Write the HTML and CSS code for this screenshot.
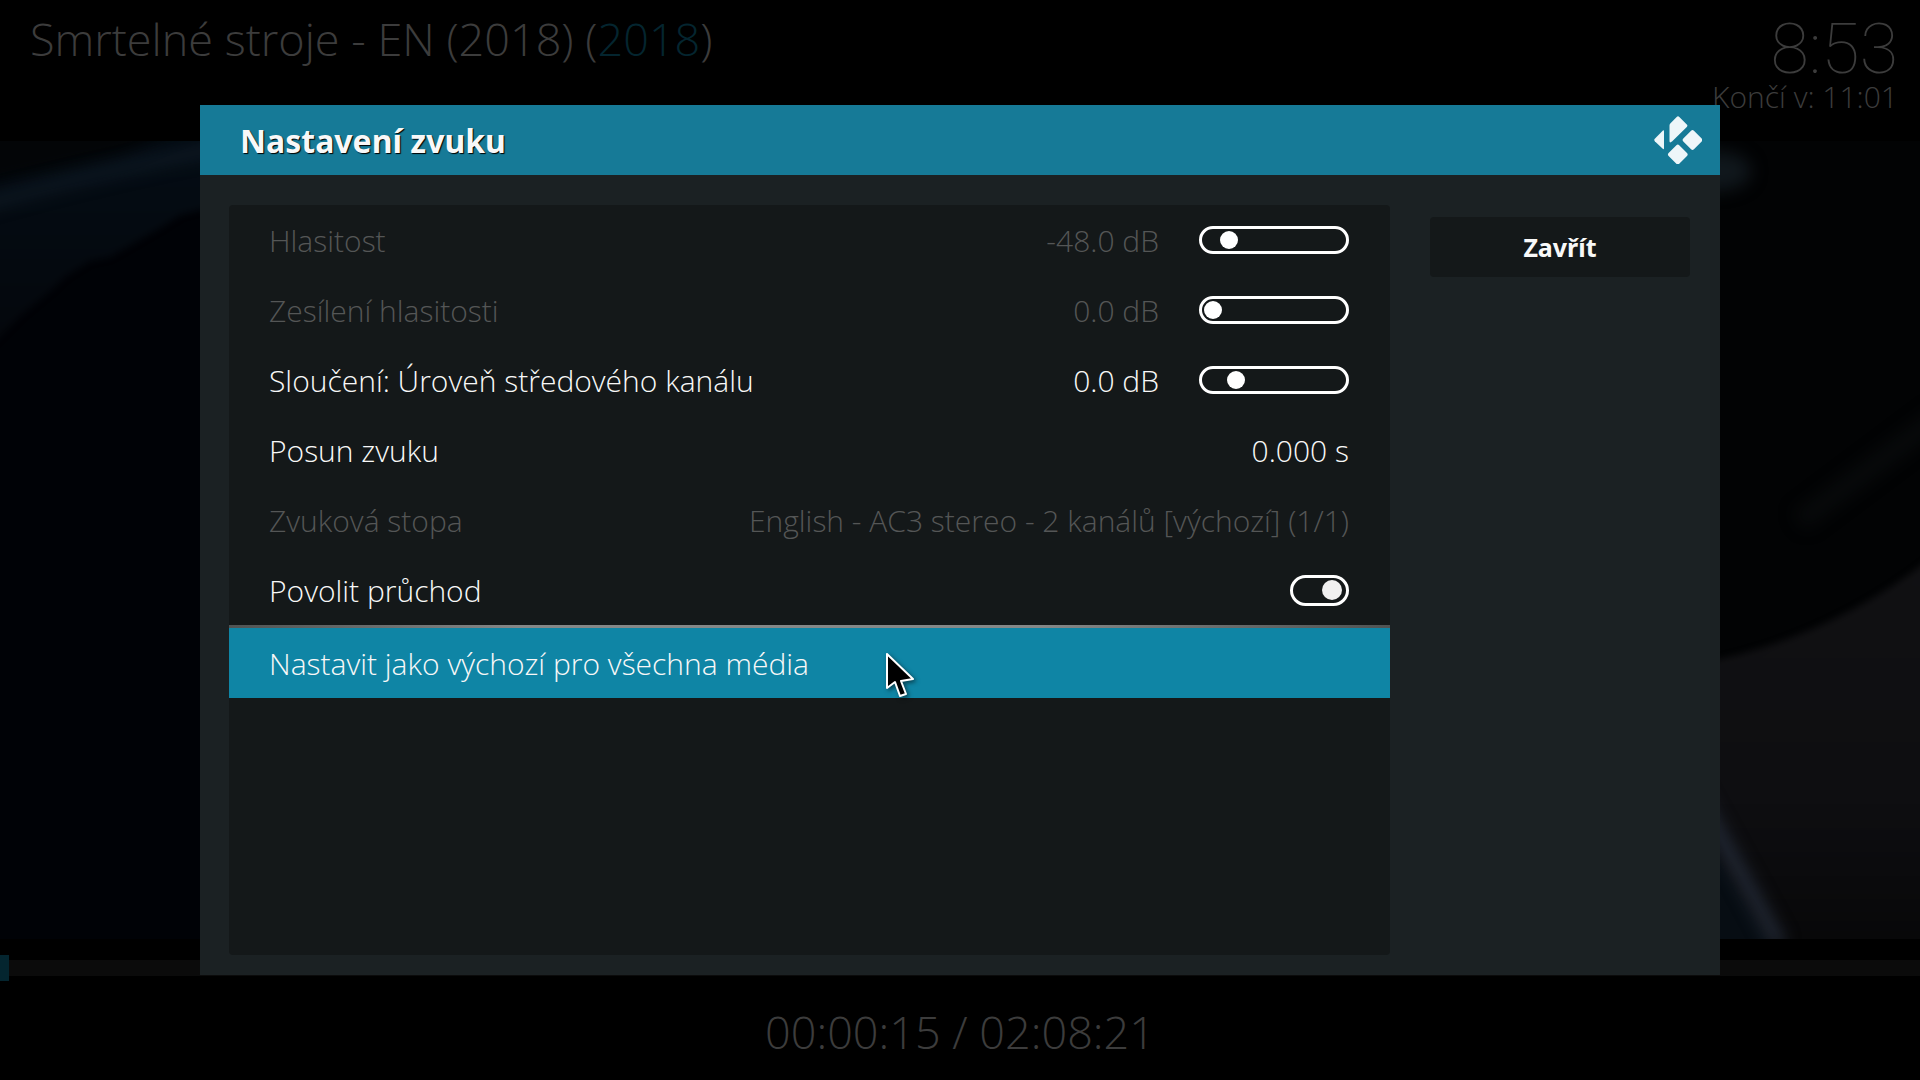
FILE: index.html
```html
<!DOCTYPE html>
<html lang="cs">
<head>
<meta charset="utf-8">
<title>Nastavení zvuku</title>
<link rel="stylesheet" href="styles.css">
</head>
<body>
<div class="player">
  <header class="osd-top">
    <h1 class="movie">Smrtelné stroje - EN (2018) (<span class="year">2018</span>)</h1>
    <div class="clock">
      <time class="now">8:53</time>
      <span class="ends">Končí v: 11:01</span>
    </div>
  </header>
  <svg class="video" viewBox="0 0 1920 798" preserveAspectRatio="none" aria-hidden="true">
    <defs>
      <linearGradient id="haze" x1="0" y1="0" x2="0" y2="1">
        <stop offset="0" stop-color="#040d15"/>
        <stop offset="1" stop-color="#04070c"/>
      </linearGradient>
      <linearGradient id="ground" x1="0" y1="0" x2="0" y2="1">
        <stop offset="0" stop-color="#111113"/>
        <stop offset="0.6" stop-color="#0e0e11"/>
        <stop offset="1" stop-color="#070708"/>
      </linearGradient>
      <filter id="soft" x="-50%" y="-50%" width="200%" height="200%" color-interpolation-filters="sRGB"><feGaussianBlur stdDeviation="8"/></filter>
      <filter id="edge" color-interpolation-filters="sRGB"><feGaussianBlur stdDeviation="3"/></filter>
    </defs>
    <rect width="1920" height="798" fill="#000206"/>
    <path d="M-10 -10H240V55L200 69L180 74L160 87L110 116L90 120L66 135L50 150L20 175L-10 205Z" fill="url(#haze)" filter="url(#edge)"/>
    <path d="M-20 -20H200L120 14L-20 44Z" fill="#030507" filter="url(#soft)"/>
    <path d="M-20 64Q90 32 240 3" fill="none" stroke="#101b26" stroke-width="10" filter="url(#soft)"/>
    <rect x="1700" width="220" height="798" fill="#020304"/>
    <ellipse cx="1715" cy="30" rx="36" ry="20" fill="#10171c" filter="url(#soft)"/>
    <path d="M1800 380Q1860 335 1940 275" fill="none" stroke="#080a0b" stroke-width="20" filter="url(#soft)"/>
    <path d="M1690 524Q1830 500 1940 410V820H1690Z" fill="url(#ground)" filter="url(#edge)"/>
    <path d="M1690 670L1776 810H1690Z" fill="#070d13" filter="url(#edge)"/>
    <path d="M1690 640L1780 805" stroke="#232a37" stroke-width="14" filter="url(#soft)"/>
  </svg>
  <div class="seek"><div class="seek-done"></div></div>
  <footer class="osd-bottom">00:00:15 / 02:08:21</footer>
</div>

<div class="overlay">
  <section class="dialog" role="dialog" aria-labelledby="dialog-title">
    <header class="dialog-head">
      <h2 id="dialog-title" class="dialog-title">Nastavení zvuku</h2>
      <svg class="logo" viewBox="0 0 48 48" aria-label="Kodi">
        <g fill="#eef6f9">
          <path d="M8.2 15.2Q10 13.400 10 15.500V32Q10 34 8.500 32.600L0.800 25.200Q-0.300 24 0.800 22.800Z"/>
          <path d="M15.500 9.500Q15.500 8.200 16.500 7.200L22.700 1Q24 -0.300 25.300 1L32.800 8.600Q34 9.800 32.800 11L18 25.600Q15.500 27.500 15.500 25Z"/>
          <rect x="31" y="16.500" width="15" height="15" rx="2" transform="rotate(45 38.500 24)"/>
          <rect x="16.300" y="31" width="15" height="15" rx="2" transform="rotate(45 23.800 38.500)"/>
        </g>
      </svg>
    </header>
    <div class="dialog-body">
      <div class="settings">
        <div class="row off">
          <label class="name" for="volume">Hlasitost</label>
          <output class="value" for="volume">-48.0 dB</output>
          <input class="slider" id="volume" type="range" min="0" max="100" value="13" disabled>
        </div>
        <div class="row off">
          <label class="name" for="gain">Zesílení hlasitosti</label>
          <output class="value" for="gain">0.0 dB</output>
          <input class="slider" id="gain" type="range" min="0" max="100" value="0" disabled>
        </div>
        <div class="row">
          <label class="name" for="center">Sloučení: Úroveň středového kanálu</label>
          <output class="value" for="center">0.0 dB</output>
          <input class="slider" id="center" type="range" min="0" max="100" value="19">
        </div>
        <button class="row" type="button">
          <span class="name">Posun zvuku</span>
          <span class="value">0.000 s</span>
        </button>
        <button class="row off" type="button" disabled>
          <span class="name">Zvuková stopa</span>
          <span class="value">English - AC3 stereo - 2 kanálů [výchozí] (1/1)</span>
        </button>
        <div class="row">
          <label class="name" for="passthrough">Povolit průchod</label>
          <input class="toggle" id="passthrough" type="checkbox" checked>
        </div>
        <div class="divider"></div>
        <button class="row focused" type="button">
          <span class="name">Nastavit jako výchozí pro všechna média</span>
        </button>
      </div>
      <aside class="actions">
        <button class="close" type="button">Zavřít</button>
      </aside>
    </div>
  </section>
</div>

<svg class="pointer" viewBox="0 0 34 50" aria-hidden="true">
  <path d="M3 3V37L11 31L16 45L22 43L17 30L29 28Z" fill="#000" stroke="#fff" stroke-width="2" stroke-linejoin="round"/>
</svg>
</body>
</html>
```
FILE: styles.css
```css
* {
  box-sizing: border-box;
}

body {
  margin: 0;
  background: #000;
  color: #f8f8f8;
  font-family: "Open Sans", "Noto Sans", sans-serif;
  font-weight: 300;
  font-size: 30px;
}

h1,
h2 {
  margin: 0;
}

button {
  border: 0;
  font: inherit;
  color: inherit;
}

/* Dimmed player behind the dialog */
.player {
  display: flex;
  flex-direction: column;
  min-height: 100vh;
  color: #3c3c3c;
}

.osd-top {
  display: flex;
  justify-content: space-between;
  height: 141px;
  padding: 9px 22px 0 30px;
}

.movie {
  font-size: 45px;
  font-weight: 300;
  line-height: 60px;
}

.year {
  color: #04252f;
}

.clock {
  display: flex;
  flex-direction: column;
  align-items: flex-end;
}

.now {
  font-family: Roboto, sans-serif;
  font-size: 70px;
  font-weight: 100;
  line-height: 80px;
}

.ends {
  font-size: 30px;
  line-height: 16px;
}

.video {
  display: block;
  flex: 1;
  width: 100%;
  min-height: 0;
}

.seek {
  height: 16px;
  margin-top: 21px;
  background: #0b0b0b;
}

.seek-done {
  width: 9px;
  height: 26px;
  margin-top: -5px;
  background: #04252f;
}

.osd-bottom {
  height: 104px;
  padding-top: 26px;
  font-size: 45px;
  line-height: 60px;
  text-align: center;
}

/* Dialog */
.overlay {
  position: absolute;
  inset: 0;
  display: flex;
  align-items: center;
  justify-content: center;
}

.dialog {
  width: 100%;
  max-width: 1520px;
  background: #1b2123;
}

.dialog-head {
  display: flex;
  align-items: center;
  justify-content: space-between;
  height: 70px;
  padding: 0 18px 0 40px;
  background: #167a97;
}

.dialog-title {
  font-family: "Noto Sans", sans-serif;
  font-size: 32px;
  font-weight: 700;
  text-shadow: 1px 1px 1px #000;
}

.logo {
  width: 48px;
  height: 48px;
}

.dialog-body {
  display: flex;
  gap: 24px;
  padding: 30px 30px 20px 29px;
}

.settings {
  flex: 1;
  min-height: 750px;
  border-radius: 4px;
  background: #141819;
}

.row {
  display: flex;
  align-items: center;
  gap: 40px;
  width: 100%;
  height: 70px;
  padding: 0 41px 0 40px;
  background: none;
  text-align: left;
}

.name {
  flex: 1;
}

.off {
  color: #545656;
}

.divider {
  height: 3px;
  background: linear-gradient(90deg, #505353, #858787 25%, #858787 70%, #505353);
}

.focused {
  background: #0f85a5;
}

.slider,
.toggle {
  appearance: none;
  margin: 0;
  border: 3px solid #fff;
  border-radius: 16px;
  background: none;
}

.slider {
  width: 150px;
  height: 28px;
  padding: 0 2px;
}

.slider::-webkit-slider-thumb {
  appearance: none;
  width: 18px;
  height: 18px;
  border-radius: 50%;
  background: #fff;
}

.toggle {
  display: flex;
  align-items: center;
  justify-content: flex-end;
  width: 59px;
  height: 31px;
  padding: 0 4px;
}

.toggle::before {
  content: "";
  width: 20px;
  height: 20px;
  border-radius: 50%;
  background: #f0f0f0;
}

.toggle:not(:checked) {
  justify-content: flex-start;
}

.actions {
  width: 276px;
  padding: 12px 0 0 16px;
}

.close {
  width: 100%;
  height: 60px;
  border-radius: 4px;
  background: #141819;
  font-family: "Noto Sans", sans-serif;
  font-size: 25px;
  font-weight: 700;
}

/* Mouse pointer over the page */
.pointer {
  position: absolute;
  left: 884px;
  top: 651px;
  width: 34px;
  height: 50px;
  filter: drop-shadow(2px 2px 2px rgb(0 0 0 / 50%));
}
```
